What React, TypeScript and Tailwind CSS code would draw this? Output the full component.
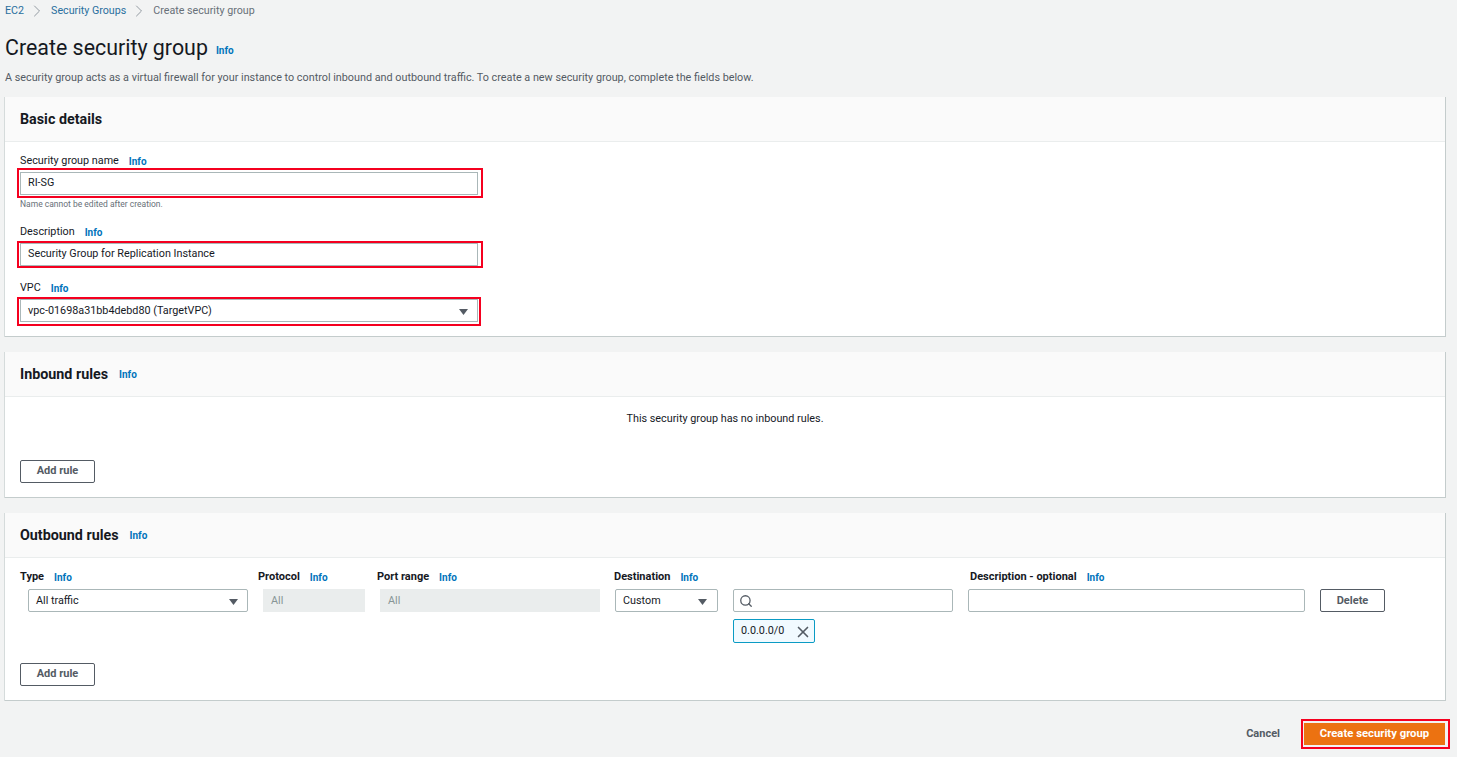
import React from "react";
import { ChevronRight, Search, X } from "lucide-react";

function Info({ className = "" }: { className?: string }) {
  return <span className={`text-[10px] font-bold text-[#0073bb] ${className}`}>Info</span>;
}

function Caret({ className = "" }: { className?: string }) {
  return (
    <svg width="9" height="6" viewBox="0 0 9 6" className={className}>
      <path d="M0 0h9L4.5 6z" fill="#545b64" />
    </svg>
  );
}

function Highlight({ className = "", children }: { className?: string; children: React.ReactNode }) {
  return <div className={`border-2 border-[#f5001f] ${className}`}>{children}</div>;
}

function Box({ className = "", children }: { className?: string; children?: React.ReactNode }) {
  return (
    <div className={`flex h-[23px] items-center border border-[#aab7b8] bg-white rounded-[2px] px-[7px] text-[#16191f] ${className}`}>
      {children}
    </div>
  );
}

function Card({ title, info, className = "", children }: { title: string; info?: boolean; className?: string; children: React.ReactNode }) {
  return (
    <section className={`mx-[5px] w-[1441px] bg-white border-r border-b border-[#c4cccc] shadow-[-1px_0_0_#d5dbdb] ${className}`}>
      <div className="flex h-[45px] items-center border-b border-[#eaeded] bg-[#fafafa] pl-[15px]">
        <h2 className="mt-[2px] text-[14.3px] font-bold text-[#16191f]">{title}</h2>
        {info && <Info className="ml-[11px] mt-px" />}
      </div>
      {children}
    </section>
  );
}

function AddRule() {
  return (
    <button className="flex h-[23px] w-[75px] items-center justify-center rounded-[2px] border border-[#545b64] bg-white text-[11px] font-bold text-[#545b64]">
      Add rule
    </button>
  );
}

function ColLabel({ label, className = "" }: { label: string; className?: string }) {
  return (
    <div className={`flex h-[17px] items-center whitespace-nowrap pt-[2px] text-[11px] font-bold text-[#16191f] ${className}`}>
      {label}
      <Info className="ml-[10px]" />
    </div>
  );
}

export default function App() {
  return (
    <div className="h-[757px] w-[1457px] overflow-hidden bg-[#f2f3f3] text-[10.8px] text-[#16191f]" style={{ fontFamily: "Roboto, sans-serif" }}>
      <nav className="flex h-[22px] items-center pl-[5px] text-[10.7px]">
        <span className="text-[#2a6f9e]">EC2</span>
        <ChevronRight size={20} strokeWidth={1.1} className="ml-[3px] mr-[4px] text-[#8a9299]" />
        <span className="text-[#2a6f9e]">Security Groups</span>
        <ChevronRight size={20} strokeWidth={1.1} className="ml-[3px] mr-[4px] text-[#8a9299]" />
        <span className="text-[#687078]">Create security group</span>
      </nav>

      <div className="flex h-[39px] items-center pl-[5px] pt-[12px]">
        <h1 className="text-[21.4px] leading-none text-[#16191f]">Create security group</h1>
        <Info className="ml-[8px] mt-[5px]" />
      </div>
      <p className="ml-[5px] mt-[6px] h-[30px] pt-[3px] text-[10.8px] text-[#545b64]">
        A security group acts as a virtual firewall for your instance to control inbound and outbound traffic. To create a new security group, complete the fields below.
      </p>

      <Card title="Basic details" className="h-[240px]">
        <div className="pl-[12px] pt-[11px]">
          <div className="ml-[3px] flex h-[17px] items-center">
            Security group name
            <Info className="ml-[10px]" />
          </div>
          <Highlight className="mt-[-2px] h-[30px] w-[466px] pl-px pt-[2px]">
            <Box className="w-[458px] !rounded-none">RI-SG</Box>
          </Highlight>
          <div className="ml-[3px] mt-[-1px] h-[14px] text-[8.5px] leading-[14px] text-[#687078]">Name cannot be edited after creation.</div>
          <div className="ml-[3px] mt-[13px] flex h-[17px] items-center">
            Description
            <Info className="ml-[10px]" />
          </div>
          <Highlight className="h-[27px] w-[466px] pl-px">
            <Box className="w-[458px] !rounded-none">Security Group for Replication Instance</Box>
          </Highlight>
          <div className="ml-[3px] mt-[12px] flex h-[17px] items-center">
            VPC
            <Info className="ml-[10px]" />
          </div>
          <Highlight className="h-[29px] w-[464px] pl-px">
            <Box className="w-[458px] justify-between !rounded-none pt-[2px]">
              <span>vpc-01698a31bb4debd80 (TargetVPC)</span>
              <Caret className="mr-[2px]" />
            </Box>
          </Highlight>
        </div>
      </Card>

      <Card title="Inbound rules" info className="mt-[15px] h-[146px]">
        <div className="flex h-[42px] items-center justify-center pt-[2px]">This security group has no inbound rules.</div>
        <div className="pl-[15px] pt-[21px]"><AddRule /></div>
      </Card>

      <Card title="Outbound rules" info className="mt-[15px] h-[188px]">
        <div className="flex pl-[15px] pt-[10px]">
          <div className="w-[238px]">
            <ColLabel label="Type" />
            <Box className="ml-[8px] mt-[4px] w-[220px] justify-between pt-[2px]">
              All traffic
              <Caret className="mr-[2px]" />
            </Box>
          </div>
          <div className="w-[119px]">
            <ColLabel label="Protocol" />
            <div className="ml-[5px] mt-[4px] flex h-[23px] w-[102px] items-center bg-[#eaeded] px-2 pt-[2px] text-[#879596]">All</div>
          </div>
          <div className="w-[237px]">
            <ColLabel label="Port range" />
            <div className="ml-[3px] mt-[4px] flex h-[23px] w-[220px] items-center bg-[#eaeded] px-2 pt-[2px] text-[#879596]">All</div>
          </div>
          <div className="w-[119px]">
            <ColLabel label="Destination" />
            <Box className="ml-[1px] mt-[4px] w-[103px] justify-between pt-[2px]">
              Custom
              <Caret className="mr-[3px]" />
            </Box>
          </div>
          <div className="w-[235px]">
            <div className="h-[17px]" />
            <Box className="mt-[4px] w-[220px] !px-[5px]">
              <Search size={14} strokeWidth={2.2} className="text-[#545b64]" />
            </Box>
            <div className="mt-[7px] flex h-[24px] w-[82px] items-center justify-between rounded-[2px] border border-[#0a9bc4] bg-[#f1faff] pl-[7px] pr-[2px] pt-px">
              0.0.0.0/0
              <X size={18} strokeWidth={2.2} className="text-[#545b64]" />
            </div>
          </div>
          <div className="w-[352px]">
            <ColLabel label="Description - optional" className="ml-[2px]" />
            <Box className="mt-[4px] w-[337px]" />
          </div>
          <button className="mt-[21px] flex h-[23px] w-[65px] items-center justify-center rounded-[2px] border border-[#545b64] bg-white pt-[2px] text-[11px] font-bold text-[#545b64]">
            Delete
          </button>
        </div>
        <div className="pl-[15px] pt-[20px]"><AddRule /></div>
      </Card>

      <div className="mt-[18px] flex items-center justify-end pr-[7px]">
        <span className="mr-[21px] text-[11px] font-bold text-[#545b64]">Cancel</span>
        <Highlight className="h-[30px] w-[149px] pl-px pt-[2px]">
          <button className="h-[22px] w-[141px] bg-[#ec7211] text-[11.3px] font-bold text-white">Create security group</button>
        </Highlight>
      </div>
    </div>
  );
}
